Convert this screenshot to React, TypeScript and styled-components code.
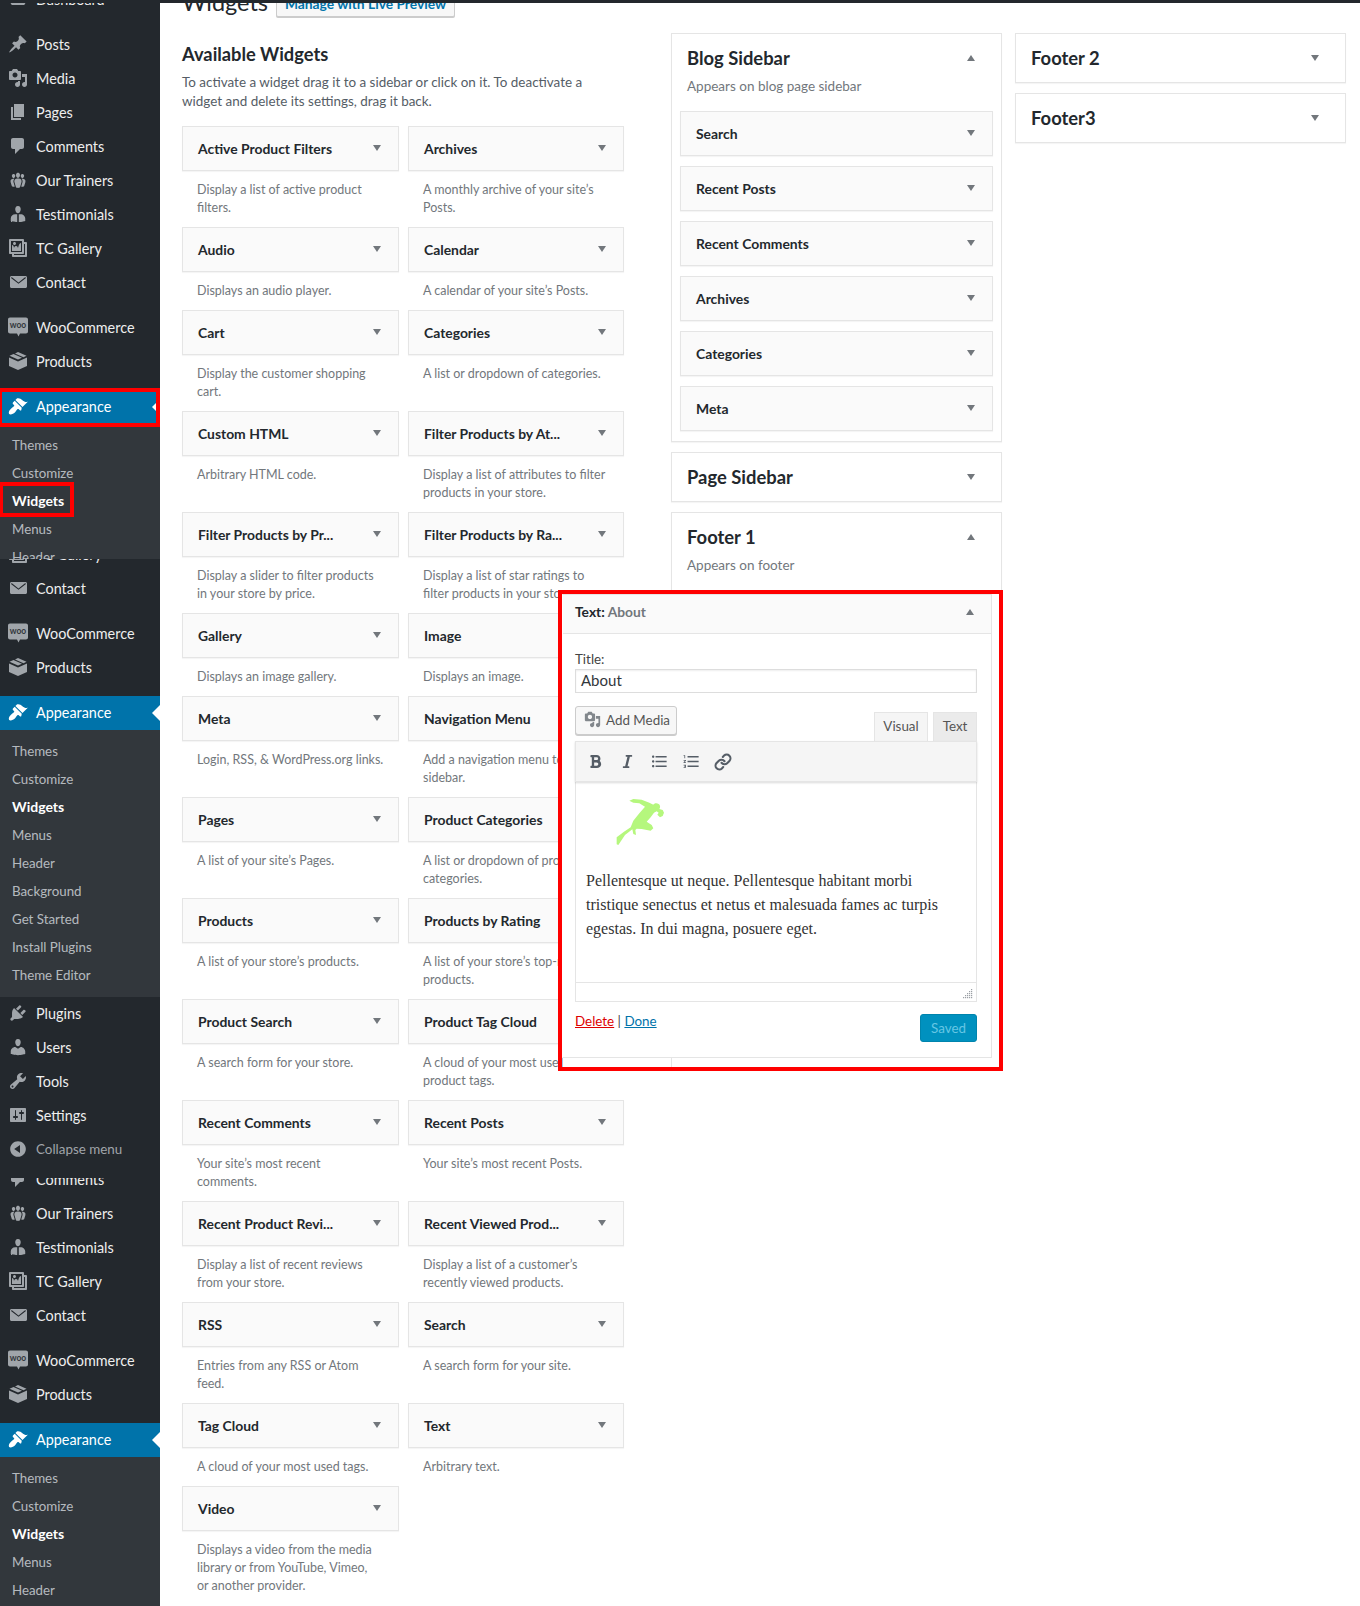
import React from "react";
import styled, { createGlobalStyle } from "styled-components";
import { FaBold, FaItalic } from "react-icons/fa";
import { MdFormatListBulleted, MdFormatListNumbered } from "react-icons/md";
import { Link as LinkIcon } from "lucide-react";

const FONT = `Lato, "Noto Sans", sans-serif`;

const ICONS: Record<string, string> = {
  dashboard:
    "M3.76 16h12.48c1.1-1.37 1.76-3.11 1.76-5 0-4.42-3.58-8-8-8s-8 3.58-8 8c0 1.89.66 3.63 1.76 5z",
  posts:
    "M10.44 3.02l1.82-1.82 6.36 6.35-1.83 1.82c-1.05-.68-2.48-.57-3.41.36l-.75.75c-.92.93-1.04 2.35-.35 3.41l-1.83 1.82-2.41-2.41-2.8 2.79c-.42.42-3.38 2.71-3.8 2.29s1.86-3.39 2.28-3.81l2.79-2.79L4.1 9.36l1.83-1.82c1.05.69 2.48.57 3.4-.36l.75-.75c.93-.92 1.05-2.35.36-3.41z",
  media:
    "M13 11V4c0-.55-.45-1-1-1h-1.67L9 1H5L3.67 3H2c-.55 0-1 .45-1 1v7c0 .55.45 1 1 1h10c.55 0 1-.45 1-1zM7 4.5c1.38 0 2.5 1.12 2.5 2.5S8.38 9.5 7 9.5 4.5 8.38 4.5 7 5.62 4.5 7 4.5zM14 6h5v10.5c0 1.38-1.12 2.5-2.5 2.5S14 17.88 14 16.5s1.12-2.5 2.5-2.5c.17 0 .34.02.5.05V9h-3V6zm-4 8.05V13h2v3.5c0 1.38-1.12 2.5-2.5 2.5S7 17.88 7 16.5 8.12 14 9.5 14c.17 0 .34.02.5.05z",
  pages: "M6 15V2h10v13H6zm-1 1h8v2H3V5h2v11z",
  comments:
    "M5 2h9c1.1 0 2 .9 2 2v7c0 1.1-.9 2-2 2h-2l-5 5v-5H5c-1.1 0-2-.9-2-2V4c0-1.1.9-2 2-2z",
  groups:
    "M8.03 4.46c-.29 1.28.55 3.46 1.97 3.46 1.41 0 2.25-2.18 1.96-3.46-.22-.98-1.08-1.63-1.96-1.63-.89 0-1.74.65-1.97 1.63zm-4.13.9c-.25 1.08.47 2.93 1.67 2.93s1.92-1.85 1.67-2.93c-.19-.83-.92-1.39-1.67-1.39s-1.48.56-1.67 1.39zm8.86 0c-.25 1.08.47 2.93 1.66 2.93 1.2 0 1.92-1.85 1.67-2.93-.19-.83-.92-1.39-1.67-1.39-.74 0-1.47.56-1.66 1.39zm-.59 11.43l1.25-4.3C14.2 10 12.71 8.47 10 8.47c-2.72 0-4.21 1.53-3.44 4.02l1.26 4.3C8.05 17.51 9 18 10 18c.98 0 1.94-.49 2.17-1.21zm-6.1-7.63c-.49.67-.96 1.83-.42 3.59l1.12 3.79c-.34.2-.77.31-1.2.31-.85 0-1.65-.41-1.85-1.03l-1.07-3.65c-.65-2.11.61-3.4 2.92-3.4.27 0 .54.02.79.06-.1.1-.2.22-.29.33zm8.35-.39c2.31 0 3.58 1.29 2.92 3.4l-1.07 3.65c-.2.62-1 1.03-1.85 1.03-.43 0-.86-.11-1.2-.31l1.11-3.77c.55-1.78.08-2.94-.42-3.61-.08-.11-.18-.23-.28-.33.25-.04.51-.06.79-.06z",
  person:
    "M10 9.25c-2.27 0-2.73-3.44-2.73-3.44C7 4.02 7.82 2 9.97 2c2.16 0 2.98 2.02 2.71 3.81 0 0-.41 3.44-2.68 3.44zM9.2 10.3v7.8c-3-.1-6.44-1.08-6.44-1.08v-2.49c0-2.25 1.94-4.23 4.47-4.23zM10.8 10.3h1.92c2.39 0 4.52 2.03 4.52 4.23v2.49s-3.4 1-6.44 1.08z",
  users:
    "M10 9.25c-2.27 0-2.73-3.44-2.73-3.44C7 4.02 7.82 2 9.97 2c2.16 0 2.98 2.02 2.71 3.81 0 0-.41 3.44-2.68 3.44zm0 2.57L12.72 10c2.39 0 4.52 2.33 4.52 4.53v2.49s-3.65 1.13-7.24 1.13c-3.65 0-7.24-1.13-7.24-1.13v-2.49c0-2.25 1.94-4.48 4.47-4.48z",
  gallery:
    "M16 4h1.96c.57 0 1.04.47 1.04 1.04v12.92c0 .57-.47 1.04-1.04 1.04H5.04C4.47 19 4 18.53 4 17.96V16H2.04C1.47 16 1 15.53 1 14.96V2.04C1 1.47 1.47 1 2.04 1h12.92c.57 0 1.04.47 1.04 1.04V4zM3 14h11V3H3v11zm5-8.5C8 4.67 7.33 4 6.5 4S5 4.67 5 5.5 5.67 7 6.5 7 8 6.33 8 5.5zm2 4.5s1-5 3-5v8H4V7c2 0 2 3 2 3s.33-2 2-2 2 2 2 2zm7 7V6h-1v8.96c0 .57-.47 1.04-1.04 1.04H6v1h11z",
  mail:
    "M19 14.5v-9c0-.83-.67-1.5-1.5-1.5H3.49c-.83 0-1.5.67-1.5 1.5v9c0 .83.67 1.5 1.5 1.5H17.5c.83 0 1.5-.67 1.5-1.5zm-1.31-9.11c.33.33.15.67-.03.84L10.5 11.8 3.3 6.23c-.18-.17-.36-.51-.03-.84s.67-.17.95.07l6.28 5.04 6.24-5.04c.28-.24.62-.4.95-.07z",
  box: "M1 6.5L10 10.5 19 6.5V15L10 19 1 15zM10 1L18.500 4.800 15.500 6.200 7 2.400zM5.500 3L14 6.800 10 8.600 1.500 4.800z",
  brush:
    "M14.48 11.06L7.41 3.99l1.5-1.5c.5-.56 2.3-.47 3.51.32 1.21.8 1.43 1.28 2.91 2.1 1.18.64 2.45 1.26 4.45.85zm-.71.71L6.7 4.7 4.93 6.47c-.39.39-.39 1.02 0 1.41l1.06 1.06c.39.39.39 1.03 0 1.42-.6.6-1.43 1.11-2.21 1.69-.35.26-.7.53-1.01.84C1.43 13.71.2 16.300 1.100 18.100c1.800.9 4.390-.33 5.730-1.670.31-.31.58-.66.84-1.01.58-.78 1.090-1.610 1.690-2.210.39-.39 1.030-.39 1.420 0l1.060 1.060c.39.39 1.020.39 1.410 0z",
  plugin:
    "M13.11 4.36L9.87 7.6 8 5.73l3.24-3.24c.35-.34 1.05-.2 1.56.32.52.51.66 1.21.31 1.55zm-8 1.77l.91-1.12 9.01 9.01-1.19.84c-.71.71-2.63 1.16-3.82 1.16H6.14L4.9 17.26c-.59.59-1.54.59-2.12 0-.59-.58-.59-1.53 0-2.12l1.24-1.24v-3.88c0-1.13.4-3.19 1.09-3.89zm7.26 3.97l3.24-3.24c.34-.35 1.04-.21 1.55.31.52.51.66 1.21.31 1.55l-3.24 3.25z",
  tools:
    "M16.68 9.77c-1.34 1.34-3.3 1.67-4.95.99l-5.41 6.52c-.99.99-2.59.99-3.58 0s-.99-2.59 0-3.57l6.52-5.42c-.68-1.65-.35-3.61.99-4.95 1.28-1.28 3.12-1.62 4.72-1.06l-2.89 2.89 2.82 2.82 2.86-2.87c.53 1.58.18 3.39-1.08 4.65zM3.81 16.21c.4.39 1.04.39 1.43 0 .4-.4.4-1.04 0-1.43-.39-.4-1.03-.4-1.43 0-.39.39-.39 1.03 0 1.43z",
  settings:
    "M18 16V4c0-.55-.45-1-1-1H3c-.55 0-1 .45-1 1v12c0 .55.45 1 1 1h14c.55 0 1-.45 1-1zM8 11h1c.55 0 1 .45 1 1s-.45 1-1 1H8v1.5c0 .28-.22.5-.5.5s-.5-.22-.5-.5V13H6c-.55 0-1-.45-1-1s.45-1 1-1h1V5.5c0-.28.22-.5.5-.5s.5.22.5.5V11zm5-2h-1c-.55 0-1-.45-1-1s.45-1 1-1h1V5.5c0-.28.22-.5.5-.5s.5.22.5.5V7h1c.55 0 1 .45 1 1s-.45 1-1 1h-1v5.5c0 .28-.22.5-.5.5s-.5-.22-.5-.5V9z",
  collapse:
    "M10 2.16c4.33 0 7.84 3.51 7.84 7.84s-3.51 7.84-7.84 7.84S2.16 14.33 2.16 10 5.71 2.16 10 2.16zm2 11.72V6.12L6.18 9.97z",
};

const GRIP_DOTS = [
  [8, 0],
  [6, 2],
  [8, 2],
  [4, 4],
  [6, 4],
  [8, 4],
  [2, 6],
  [4, 6],
  [6, 6],
  [8, 6],
  [0, 8],
  [2, 8],
  [4, 8],
  [6, 8],
  [8, 8],
];

const GlobalStyle = createGlobalStyle`
  html, body {
    margin: 0;
    padding: 0;
    background: #fff;
  }
  * {
    box-sizing: border-box;
  }
`;

const Page = styled.div`
  position: relative;
  width: 1360px;
  height: 1606px;
  overflow: hidden;
  background: #fff;
  font-family: ${FONT};
  font-size: 13px;
  color: #444;
`;

const TopStrip = styled.div`
  position: relative;
  z-index: 1;
  height: 3px;
  background: #23282d;
`;

const Layout = styled.div`
  display: flex;
  height: 1603px;
`;

const Sidebar = styled.nav`
  width: 160px;
  flex: none;
  background: #23282d;
`;

const Segment = styled.div<{ $height: number }>`
  height: ${({ $height }) => $height}px;
  overflow: hidden;
`;

const SegmentInner = styled.div<{ $skip: number }>`
  margin-top: -${({ $skip }) => $skip}px;
`;

const MenuRow = styled.div<{ $active?: boolean }>`
  position: relative;
  display: flex;
  align-items: center;
  height: 34px;
  padding: 0 0 2px 8px;
  background: ${({ $active }) => ($active ? "#0073aa" : "transparent")};
  color: ${({ $active }) => ($active ? "#fff" : "#eee")};
  font-size: 14.4px;

  ${({ $active }) =>
    $active &&
    `&::after {
      content: "";
      position: absolute;
      right: 0;
      top: 9px;
      border: 8px solid transparent;
      border-right-color: #fff;
      border-left-width: 0;
    }`}
`;

const CollapseRow = styled(MenuRow)`
  height: 33px;
`;

const MenuIcon = styled.svg<{ $active?: boolean }>`
  width: 20px;
  height: 20px;
  flex: none;
  margin-right: 8px;
  fill: ${({ $active }) => ($active ? "#fff" : "#a0a5aa")};
`;

const WooBadge = styled.svg`
  width: 20px;
  height: 20px;
  flex: none;
  margin-right: 8px;
`;

const CollapseLabel = styled.span`
  font-size: 13.4px;
  color: #a0a5aa;
`;

const MenuGap = styled.div`
  height: 11px;
`;

const Submenu = styled.div<{ $long?: boolean }>`
  background: #32373c;
  padding: 7px 0 ${({ $long }) => ($long ? 8 : 7)}px;
`;

const SubItem = styled.div<{ $current?: boolean }>`
  height: 28px;
  line-height: 28px;
  padding-left: 12px;
  font-size: ${({ $current }) => ($current ? 14 : 13.3)}px;
  color: ${({ $current }) => ($current ? "#fff" : "rgba(240, 245, 250, 0.7)")};
  font-weight: ${({ $current }) => ($current ? 700 : 400)};
`;

const Main = styled.main`
  flex: 1;
  padding-left: 22px;
  min-width: 0;
`;

const TitleRow = styled.div`
  display: flex;
  align-items: flex-end;
  height: 30px;
  margin-top: -16px;
`;

const PageTitle = styled.h1`
  margin: 0 8px 0 0;
  font-size: 23.5px;
  font-weight: 400;
  line-height: 30px;
  color: #23282d;
`;

const PreviewButton = styled.a`
  display: flex;
  align-items: center;
  justify-content: center;
  width: 179px;
  height: 28px;
  background: #f7f7f7;
  border: 1px solid #ccc;
  border-radius: 2px;
  box-shadow: 0 1px 0 #ccc;
  color: #0073aa;
  font-size: 13.8px;
  font-weight: 700;
`;

const Columns = styled.div`
  display: flex;
  align-items: flex-start;
  margin-top: 16px;
`;

const AvailableColumn = styled.section`
  width: 442px;
  flex: none;
  margin-right: 47px;
`;

const SectionTitle = styled.h2`
  margin: 9px 0 0;
  font-size: 18.3px;
  font-weight: 700;
  line-height: 25px;
  color: #23282d;
`;

const Intro = styled.p`
  margin: 6px 0 16px;
  font-size: 13.45px;
  line-height: 18.5px;
  color: #555d66;
  white-space: pre;
`;

const WidgetGrid = styled.div`
  display: grid;
  grid-template-columns: 217px 216px;
  column-gap: 9px;
  align-items: start;
`;

const WidgetHead = styled.div`
  display: flex;
  align-items: center;
  justify-content: space-between;
  height: 45px;
  padding: 0 17px 1px 15px;
  background: #fafafa;
  border: 1px solid #e5e5e5;
  box-shadow: 0 1px 1px rgba(0, 0, 0, 0.04);
  color: #23282d;
  font-size: 13.9px;
  font-weight: 700;
`;

const Arrow = styled.span<{ $up?: boolean }>`
  display: block;
  flex: none;
  width: 0;
  height: 0;
  border-left: 4.5px solid transparent;
  border-right: 4.5px solid transparent;
  ${({ $up }) =>
    $up ? "border-bottom: 6px solid #72777c;" : "border-top: 6px solid #72777c;"}
`;

const WidgetDescription = styled.p`
  margin: 10px 0;
  padding: 0 15px;
  line-height: 18px;
  font-size: 12.5px;
  color: #72777c;
  white-space: pre;
`;

const SidebarColumn = styled.section`
  width: 331px;
  flex: none;
  margin-right: 13px;
`;

const SidebarPanel = styled.div<{ $height?: number }>`
  background: #fff;
  border: 1px solid #e5e5e5;
  box-shadow: 0 1px 1px rgba(0, 0, 0, 0.04);
  margin-bottom: 10px;
  ${({ $height }) => ($height ? `height: ${$height}px;` : "")}
`;

const PanelTitle = styled.div`
  display: flex;
  align-items: center;
  justify-content: space-between;
  height: 48px;
  padding: 0 26px 0 15px;
  font-size: 18.4px;
  font-weight: 700;
  color: #23282d;
`;

const PanelDescription = styled.p`
  margin: -5px 0 16px 15px;
  line-height: 18px;
  font-size: 13.5px;
  color: #72777c;
`;

const PanelWidgets = styled.div`
  padding: 0 8px;
`;

const PanelWidget = styled(WidgetHead)`
  margin-bottom: 10px;
`;

const RedFrame = styled.div<{ $left: number; $top: number; $width: number; $height: number }>`
  position: absolute;
  left: ${({ $left }) => $left}px;
  top: ${({ $top }) => $top}px;
  width: ${({ $width }) => $width}px;
  height: ${({ $height }) => $height}px;
  border: 4px solid #f00;
`;

const EditorFrame = styled(RedFrame)`
  background: #fff;

  &::before {
    content: "";
    position: absolute;
    left: 109px;
    bottom: 0;
    width: 1px;
    height: 10px;
    background: #e5e5e5;
  }

  &::after {
    content: "";
    position: absolute;
    left: 0;
    bottom: 0;
    width: 1px;
    height: 9px;
    background: #9ec7e8;
  }
`;

const TextWidget = styled.div`
  width: 430px;
  height: 464px;
  border: 1px solid #e5e5e5;
  border-left-color: #fff;
`;

const TextWidgetHead = styled.div`
  display: flex;
  align-items: center;
  justify-content: space-between;
  height: 39px;
  padding: 0 17px 5px 12px;
  background: #fafafa;
  border-bottom: 1px solid #e5e5e5;
  color: #23282d;
  font-size: 13.8px;
  font-weight: 700;
`;

const MutedTitle = styled.span`
  color: #72777c;
`;

const TextWidgetBody = styled.div`
  padding: 16px 14px 0 12px;
`;

const FieldLabel = styled.label`
  display: block;
  line-height: 18px;
  font-size: 13.4px;
  color: #444;
`;

const TitleInput = styled.div`
  height: 24px;
  margin-top: 1px;
  padding-left: 5px;
  border: 1px solid #ddd;
  box-shadow: inset 0 1px 2px rgba(0, 0, 0, 0.07);
  color: #32373c;
  font-size: 15px;
  line-height: 21px;
`;

const EditorTools = styled.div`
  display: flex;
  justify-content: space-between;
  height: 35px;
  margin-top: 13px;
`;

const AddMedia = styled.div`
  display: flex;
  align-items: center;
  gap: 5px;
  width: 102px;
  height: 29px;
  padding: 0 0 2px 8px;
  background: #f7f7f7;
  border: 1px solid #ccc;
  border-radius: 3px;
  box-shadow: 0 1px 0 #ccc;
  color: #555;
  font-size: 13.4px;
`;

const MediaGlyph = styled.svg`
  width: 17px;
  height: 17px;
  fill: #82878c;
`;

const Tabs = styled.div`
  display: flex;
  align-items: flex-end;
  gap: 5px;
`;

const Tab = styled.div<{ $active?: boolean }>`
  display: flex;
  align-items: center;
  justify-content: center;
  width: ${({ $active }) => ($active ? 54 : 44)}px;
  height: 29px;
  padding-bottom: 2px;
  background: ${({ $active }) => ($active ? "#f5f5f5" : "#ebebeb")};
  border: 1px solid #e5e5e5;
  border-bottom: none;
  color: #555;
  font-size: 13.4px;
`;

const Toolbar = styled.div`
  display: flex;
  align-items: center;
  height: 41px;
  padding-left: 3px;
  background: #f5f5f5;
  border: 1px solid #e5e5e5;
  box-shadow: 0 1px 2px rgba(0, 0, 0, 0.15);
  color: #555d66;
  position: relative;
`;

const ToolButton = styled.span`
  display: flex;
  align-items: center;
  justify-content: center;
  width: 32px;
  height: 30px;
`;

const EditorArea = styled.div`
  height: 200px;
  padding: 8px 10px 0;
  border-left: 1px solid #e5e5e5;
  border-right: 1px solid #e5e5e5;
  font-family: "Liberation Serif", serif;
  font-size: 16px;
  line-height: 24px;
  color: #333;
`;

const RunnerPicture = styled.svg`
  display: block;
  width: 100px;
  height: 70px;
  margin: 0 0 9px 14px;
`;

const EditorParagraph = styled.p`
  margin: 0;
  white-space: pre;
`;

const StatusBar = styled.div`
  display: flex;
  align-items: flex-end;
  justify-content: flex-end;
  height: 20px;
  padding: 0 3px 2px 0;
  border: 1px solid #e5e5e5;
`;

const ResizeGrip = styled.svg`
  width: 10px;
  height: 10px;
  fill: #9ba0a5;
`;

const WidgetActions = styled.div`
  display: flex;
  align-items: flex-start;
  justify-content: space-between;
  margin-top: 10px;
`;

const ActionLinks = styled.div`
  line-height: 18px;
  font-size: 13.4px;
  color: #444;
`;

const DeleteLink = styled.a`
  color: #d00;
  text-decoration: underline;
`;

const DoneLink = styled.a`
  color: #0073aa;
  text-decoration: underline;
`;

const SavedButton = styled.div`
  display: flex;
  align-items: center;
  justify-content: center;
  width: 57px;
  height: 28px;
  margin-top: 2px;
  background: #0091bf;
  border: 1px solid #0084ad;
  border-radius: 3px;
  color: #66c6e4;
  font-size: 13.4px;
`;

type MenuEntry = { label: string; icon: string } | "gap" | "woo";

const TOP_ITEMS: MenuEntry[] = [
  { label: "Dashboard", icon: "dashboard" },
  "gap",
  { label: "Posts", icon: "posts" },
  { label: "Media", icon: "media" },
  { label: "Pages", icon: "pages" },
  { label: "Comments", icon: "comments" },
  { label: "Our Trainers", icon: "groups" },
  { label: "Testimonials", icon: "person" },
  { label: "TC Gallery", icon: "gallery" },
  { label: "Contact", icon: "mail" },
  "gap",
  "woo",
  { label: "Products", icon: "box" },
  "gap",
];

const SHOP_ITEMS: MenuEntry[] = [
  { label: "TC Gallery", icon: "gallery" },
  { label: "Contact", icon: "mail" },
  "gap",
  "woo",
  { label: "Products", icon: "box" },
  "gap",
];

const LOWER_ITEMS: MenuEntry[] = [
  { label: "Comments", icon: "comments" },
  { label: "Our Trainers", icon: "groups" },
  { label: "Testimonials", icon: "person" },
  { label: "TC Gallery", icon: "gallery" },
  { label: "Contact", icon: "mail" },
  "gap",
  "woo",
  { label: "Products", icon: "box" },
  "gap",
];

const TOOL_ITEMS: MenuEntry[] = [
  { label: "Plugins", icon: "plugin" },
  { label: "Users", icon: "users" },
  { label: "Tools", icon: "tools" },
  { label: "Settings", icon: "settings" },
];

const SHORT_SUBMENU = ["Themes", "Customize", "Widgets", "Menus", "Header"];
const FULL_SUBMENU = [
  ...SHORT_SUBMENU,
  "Background",
  "Get Started",
  "Install Plugins",
  "Theme Editor",
];

const WIDGETS: [string, string][] = [
  ["Active Product Filters", "Display a list of active product\nfilters."],
  ["Archives", "A monthly archive of your site’s\nPosts."],
  ["Audio", "Displays an audio player."],
  ["Calendar", "A calendar of your site’s Posts."],
  ["Cart", "Display the customer shopping\ncart."],
  ["Categories", "A list or dropdown of categories."],
  ["Custom HTML", "Arbitrary HTML code."],
  ["Filter Products by At...", "Display a list of attributes to filter\nproducts in your store."],
  ["Filter Products by Pr...", "Display a slider to filter products\nin your store by price."],
  ["Filter Products by Ra...", "Display a list of star ratings to\nfilter products in your store."],
  ["Gallery", "Displays an image gallery."],
  ["Image", "Displays an image."],
  ["Meta", "Login, RSS, & WordPress.org links."],
  ["Navigation Menu", "Add a navigation menu to your\nsidebar."],
  ["Pages", "A list of your site’s Pages."],
  ["Product Categories", "A list or dropdown of product\ncategories."],
  ["Products", "A list of your store’s products."],
  ["Products by Rating", "A list of your store’s top-rated\nproducts."],
  ["Product Search", "A search form for your store."],
  ["Product Tag Cloud", "A cloud of your most used\nproduct tags."],
  ["Recent Comments", "Your site’s most recent\ncomments."],
  ["Recent Posts", "Your site’s most recent Posts."],
  ["Recent Product Revi...", "Display a list of recent reviews\nfrom your store."],
  ["Recent Viewed Prod...", "Display a list of a customer’s\nrecently viewed products."],
  ["RSS", "Entries from any RSS or Atom\nfeed."],
  ["Search", "A search form for your site."],
  ["Tag Cloud", "A cloud of your most used tags."],
  ["Text", "Arbitrary text."],
  ["Video", "Displays a video from the media\nlibrary or from YouTube, Vimeo,\nor another provider."],
];

const BLOG_WIDGETS = ["Search", "Recent Posts", "Recent Comments", "Archives", "Categories", "Meta"];

const MenuGlyph = ({ name, active }: { name: string; active?: boolean }) => (
  <MenuIcon viewBox="0 0 20 20" $active={active}>
    <path d={ICONS[name]} />
  </MenuIcon>
);

const WooRow = () => (
  <MenuRow>
    <WooBadge viewBox="0 0 20 20">
      <path
        fill="#a0a5aa"
        d="M2 .5h16c1 0 2 .8 2 2v12c0 1-.8 2-2 2h-6l-1.500 3-1.500-3H2c-1 0-2-.8-2-2v-12C0 1.300.8.500 2 .5z"
      />
      <text x="10" y="11" textAnchor="middle" fontSize="8.500" fontWeight="700" fill="#32373c" fontFamily={FONT}>
        woo
      </text>
    </WooBadge>
    WooCommerce
  </MenuRow>
);

const MenuList = ({ items }: { items: MenuEntry[] }) => (
  <>
    {items.map((item, i) => {
      if (item === "gap") return <MenuGap key={i} />;
      if (item === "woo") return <WooRow key={i} />;
      return (
        <MenuRow key={i}>
          <MenuGlyph name={item.icon} />
          {item.label}
        </MenuRow>
      );
    })}
  </>
);

const AppearanceBlock = ({ entries }: { entries: string[] }) => (
  <>
    <MenuRow $active>
      <MenuGlyph name="brush" active />
      Appearance
    </MenuRow>
    <Submenu $long={entries.length > 5}>
      {entries.map((entry) => (
        <SubItem key={entry} $current={entry === "Widgets"}>
          {entry}
        </SubItem>
      ))}
    </Submenu>
  </>
);

const Runner = () => (
  <RunnerPicture viewBox="0 0 300 210">
    <path
      fill="#b5f77d"
      d="M88 32L100 27 125 29 148 38 160 44C162 40 170 38 176 42 182 46 181 54 178 57L188 60 192 68 188 78 180 82 172 74 176 68 170 64 162 68 152 82 140 95 155 105 160 115 152 122 125 117 110 116 106 120 108 135 100 132 97 118 75 135 55 165 50 163 50 142 72 125 92 112 100 92 118 70 135 50 118 40 100 38z"
    />
  </RunnerPicture>
);

const EditorWidget = () => (
  <TextWidget>
    <TextWidgetHead>
      <span>
        Text: <MutedTitle>About</MutedTitle>
      </span>
      <Arrow $up />
    </TextWidgetHead>
    <TextWidgetBody>
      <FieldLabel>Title:</FieldLabel>
      <TitleInput>About</TitleInput>
      <EditorTools>
        <AddMedia>
          <MediaGlyph viewBox="0 0 20 20">
            <path d={ICONS.media} />
          </MediaGlyph>
          Add Media
        </AddMedia>
        <Tabs>
          <Tab $active>Visual</Tab>
          <Tab>Text</Tab>
        </Tabs>
      </EditorTools>
      <Toolbar>
        <ToolButton>
          <FaBold size={15} />
        </ToolButton>
        <ToolButton>
          <FaItalic size={15} />
        </ToolButton>
        <ToolButton>
          <MdFormatListBulleted size={19} />
        </ToolButton>
        <ToolButton>
          <MdFormatListNumbered size={19} />
        </ToolButton>
        <ToolButton>
          <LinkIcon size={18} strokeWidth={2.8} />
        </ToolButton>
      </Toolbar>
      <EditorArea>
        <Runner />
        <EditorParagraph>
          {"Pellentesque ut neque. Pellentesque habitant morbi\ntristique senectus et netus et malesuada fames ac turpis\negestas. In dui magna, posuere eget."}
        </EditorParagraph>
      </EditorArea>
      <StatusBar>
        <ResizeGrip viewBox="0 0 10 10">
          {GRIP_DOTS.map(([x, y]) => (
            <rect key={`${x}-${y}`} x={x} y={y} width="1.2" height="1.2" />
          ))}
        </ResizeGrip>
      </StatusBar>
      <WidgetActions>
        <ActionLinks>
          <DeleteLink>Delete</DeleteLink> | <DoneLink>Done</DoneLink>
        </ActionLinks>
        <SavedButton>Saved</SavedButton>
      </WidgetActions>
    </TextWidgetBody>
  </TextWidget>
);

export default function App() {
  return (
    <Page>
      <GlobalStyle />
      <TopStrip />
      <Layout>
        <Sidebar>
          <Segment $height={556}>
            <SegmentInner $skip={20}>
              <MenuList items={TOP_ITEMS} />
              <AppearanceBlock entries={SHORT_SUBMENU} />
            </SegmentInner>
          </Segment>
          <Segment $height={619}>
            <SegmentInner $skip={21}>
              <MenuList items={SHOP_ITEMS} />
              <AppearanceBlock entries={FULL_SUBMENU} />
              <MenuList items={TOOL_ITEMS} />
              <CollapseRow>
                <MenuGlyph name="collapse" />
                <CollapseLabel>Collapse menu</CollapseLabel>
              </CollapseRow>
            </SegmentInner>
          </Segment>
          <Segment $height={428}>
            <SegmentInner $skip={15}>
              <MenuList items={LOWER_ITEMS} />
              <AppearanceBlock entries={SHORT_SUBMENU} />
            </SegmentInner>
          </Segment>
        </Sidebar>
        <Main>
          <TitleRow>
            <PageTitle>Widgets</PageTitle>
            <PreviewButton>Manage with Live Preview</PreviewButton>
          </TitleRow>
          <Columns>
            <AvailableColumn>
              <SectionTitle>Available Widgets</SectionTitle>
              <Intro>
                {"To activate a widget drag it to a sidebar or click on it. To deactivate a\nwidget and delete its settings, drag it back."}
              </Intro>
              <WidgetGrid>
                {WIDGETS.map(([title, description]) => (
                  <div key={title}>
                    <WidgetHead>
                      {title}
                      <Arrow />
                    </WidgetHead>
                    <WidgetDescription>{description}</WidgetDescription>
                  </div>
                ))}
              </WidgetGrid>
            </AvailableColumn>
            <SidebarColumn>
              <SidebarPanel>
                <PanelTitle>
                  Blog Sidebar
                  <Arrow $up />
                </PanelTitle>
                <PanelDescription>Appears on blog page sidebar</PanelDescription>
                <PanelWidgets>
                  {BLOG_WIDGETS.map((name) => (
                    <PanelWidget key={name}>
                      {name}
                      <Arrow />
                    </PanelWidget>
                  ))}
                </PanelWidgets>
              </SidebarPanel>
              <SidebarPanel>
                <PanelTitle>
                  Page Sidebar
                  <Arrow />
                </PanelTitle>
              </SidebarPanel>
              <SidebarPanel $height={500}>
                <PanelTitle>
                  Footer 1
                  <Arrow $up />
                </PanelTitle>
                <PanelDescription>Appears on footer</PanelDescription>
              </SidebarPanel>
            </SidebarColumn>
            <SidebarColumn>
              <SidebarPanel>
                <PanelTitle>
                  Footer 2
                  <Arrow />
                </PanelTitle>
              </SidebarPanel>
              <SidebarPanel>
                <PanelTitle>
                  Footer3
                  <Arrow />
                </PanelTitle>
              </SidebarPanel>
            </SidebarColumn>
          </Columns>
        </Main>
      </Layout>
      <RedFrame $left={-2} $top={388} $width={162} $height={39} />
      <RedFrame $left={-1} $top={482} $width={75} $height={35} />
      <EditorFrame $left={558} $top={590} $width={445} $height={481}>
        <EditorWidget />
      </EditorFrame>
    </Page>
  );
}
